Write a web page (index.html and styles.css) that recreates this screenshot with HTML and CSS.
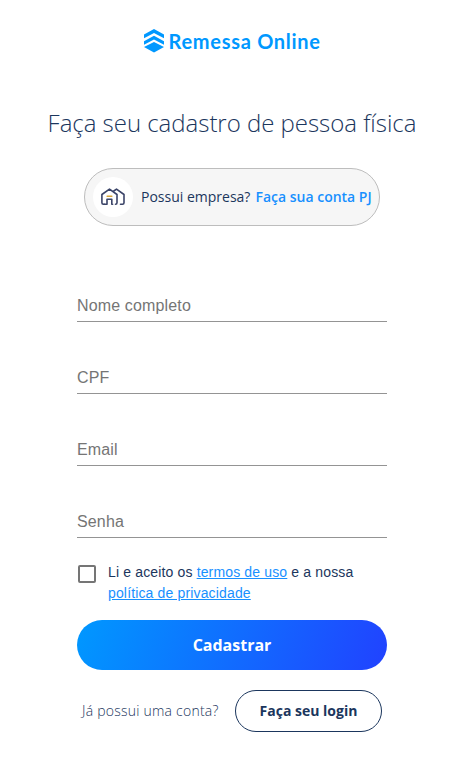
FILE: index.html
```html
<!DOCTYPE html>
<html lang="pt-BR">
<head>
<meta charset="utf-8">
<title>Remessa Online</title>
<link rel="stylesheet" href="styles.css">
</head>
<body>
<main class="page">
  <header class="logo">
    <svg class="logo-mark" width="20" height="24" viewBox="0 0 20 24" fill="#0098ff">
      <path d="M10 0 20 5.6V9.2L10 3.9 0 9.2V5.6Z"/>
      <path d="M10 6.7 20 12.2V15.8L10 10.5 0 15.8V12.2Z"/>
      <path d="M10 13 20 18.1 10 23.5 0 18.1Z"/>
    </svg>
    <span class="logo-name">Remessa Online</span>
  </header>
  <h1 class="title">Faça seu cadastro de pessoa física</h1>
  <div class="company">
    <span class="company-icon">
      <svg width="24" height="18" viewBox="0 0 24 18" fill="none" stroke="#3b4468" stroke-width="1.6" stroke-linecap="round" stroke-linejoin="round">
        <path d="M3.2 16.2H2.4Q.9 16.2.9 14.7V6.5L8.5 1.1 16 6.5V14.7Q16 16.2 14.5 16.2"/>
        <path d="M12.8 3 15.5 1.1 23 6.5V14.7Q23 16.2 21.5 16.2H19.5"/>
        <path d="M6 16.2V11.2H10.8V16.2M3.2 16.2H6M10.8 16.2H11.6"/>
        <path d="M6.2 8.3H10.8" stroke="#d5a43b"/>
      </svg>
    </span>
    <span class="company-question">Possui empresa?</span>
    <a class="company-link">Faça sua conta PJ</a>
  </div>
  <form class="form">
    <label class="field">Nome completo</label>
    <label class="field">CPF</label>
    <label class="field">Email</label>
    <label class="field">Senha</label>
    <div class="terms">
      <span class="checkbox"></span>
      <p class="terms-text">Li e aceito os <a class="link">termos de uso</a> e a nossa<br><a class="link">política de privacidade</a></p>
    </div>
    <button class="submit" type="button">Cadastrar</button>
    <div class="login">
      <span class="login-question">Já possui uma conta?</span>
      <button class="login-button" type="button">Faça seu login</button>
    </div>
  </form>
</main>
</body>
</html>
```
FILE: styles.css
```css
* { box-sizing: border-box; }
body {
  margin: 0;
  background: #fff;
  color: #1b365d;
  font-family: "Open Sans", sans-serif;
  overflow: hidden;
}
.page {
  width: 464px;
  height: 763px;
  display: flex;
  flex-direction: column;
  align-items: center;
}
.logo {
  display: flex;
  align-items: flex-start;
  gap: 5px;
  width: 177px;
  height: 24px;
  margin-top: 29px;
}
.logo-mark { flex: none; }
.logo-name {
  font: 700 20px/24px Lato, sans-serif;
  color: #0098ff;
  white-space: nowrap;
  letter-spacing: .72px;
}
.title {
  margin: 53px 0 0;
  font-size: 24px;
  line-height: 34px;
  font-weight: 300;
  letter-spacing: -.03px;
  white-space: nowrap;
}
.company {
  display: flex;
  align-items: center;
  width: 296px;
  height: 58px;
  margin-top: 28px;
  padding-left: 8px;
  border: 1px solid #bdbdbd;
  border-radius: 29px;
  background: #f6f6f6;
  font-size: 14px;
  white-space: nowrap;
}
.company-icon {
  display: flex;
  align-items: center;
  justify-content: center;
  flex: none;
  width: 40px;
  height: 40px;
  margin-right: 8px;
  border-radius: 50%;
  background: #fff;
}
.company-question, .company-link { padding-bottom: 2px; }
.company-link {
  margin-left: 5px;
  color: #1890ff;
  font-weight: 600;
}
.form { width: 310px; margin-top: 64px; }
.field {
  display: block;
  height: 32px;
  margin-bottom: 40px;
  border-bottom: 1px solid #949494;
  color: #757575;
  font: 16px/31px "Liberation Sans", sans-serif;
  letter-spacing: .15px;
}
.terms {
  display: flex;
  margin-top: -16px;
  font: 14px/21px "Liberation Sans", sans-serif;
}
.checkbox {
  flex: none;
  width: 18px;
  height: 18px;
  margin: 3px 12px 0 1px;
  border: 2px solid #757575;
  border-radius: 2px;
}
.terms-text { margin: 0; white-space: nowrap; letter-spacing: .15px; }
.link { color: #1890ff; text-decoration: underline; }
.submit {
  display: block;
  width: 310px;
  height: 50px;
  margin-top: 16px;
  padding: 0;
  border: 0;
  border-radius: 25px;
  background: linear-gradient(110deg, #0098ff, #2142ff);
  color: #fff;
  font: 700 16px/50px "Open Sans", sans-serif;
}
.login {
  display: flex;
  align-items: center;
  justify-content: space-between;
  margin-top: 20px;
  padding: 0 5px;
  font-size: 14px;
  white-space: nowrap;
}
.login-question { padding-bottom: 2px; font-weight: 300; letter-spacing: .23px; }
.login-button {
  width: 147px;
  height: 42px;
  padding: 0;
  border: 1px solid #1b365d;
  border-radius: 21px;
  background: #fff;
  color: #1b365d;
  font: 700 14px/40px "Open Sans", sans-serif;
}
```
